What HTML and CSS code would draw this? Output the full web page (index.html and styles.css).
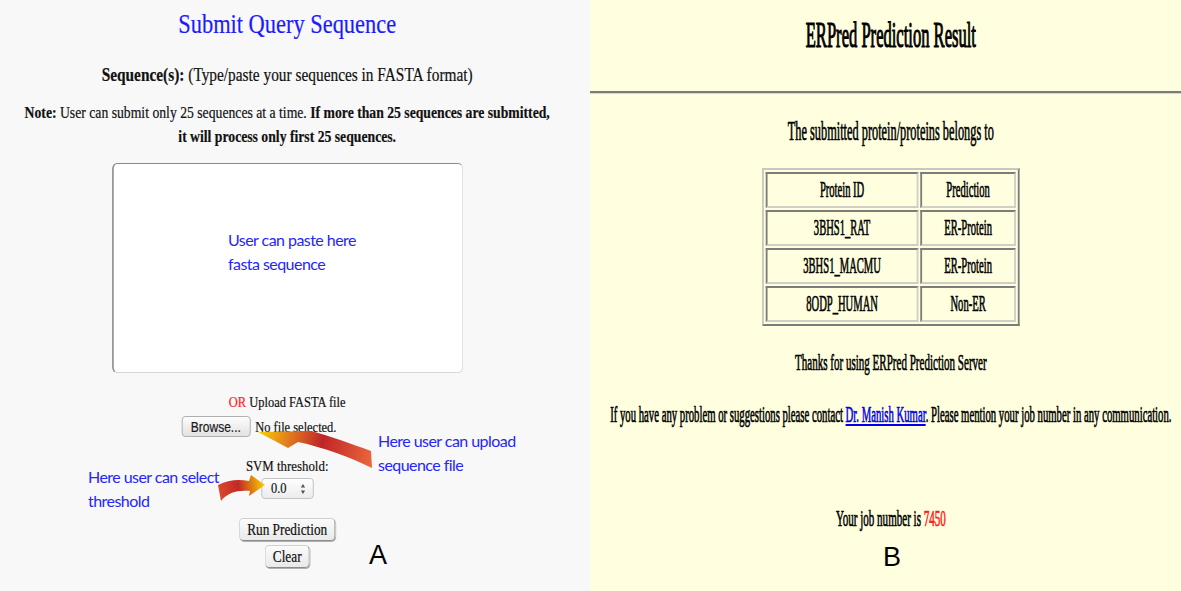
FILE: index.html
```html
<!DOCTYPE html>
<html lang="en">
<head>
<meta charset="utf-8">
<title>ERPred</title>
<link rel="stylesheet" href="styles.css">
</head>
<body>
<div class="page">
  <section class="panel left">
    <div class="left-inner">
      <h1 class="q-title">Submit Query Sequence</h1>
      <p class="seq-label"><b>Sequence(s):</b> (Type/paste your sequences in FASTA format)</p>
      <p class="note"><b>Note:</b> User can submit only 25 sequences at a time. <b>If more than 25 sequences are submitted,<br>it will process only first 25 sequences.</b></p>
      <div class="seq-box"></div>
      <p class="upload"><span class="or">OR</span> Upload FASTA file</p>
      <div class="file-row"><span class="browse">Browse...</span><span class="nofile">No file selected.</span></div>
      <p class="svm">SVM threshold:</p>
      <div class="spinner"><span class="spin-val">0.0</span><svg class="spin-arrows" width="6" height="12" viewBox="0 0 6 12"><path d="M3 1 L5.6 4.6 L0.4 4.6 Z M0.4 7.4 L5.6 7.4 L3 11 Z" fill="#555"/></svg></div>
      <span class="pbtn run">Run Prediction</span>
      <span class="pbtn clear">Clear</span>
    </div>
    <svg class="arrows" width="590" height="591" viewBox="0 0 590 591">
      <defs>
        <linearGradient id="g1" gradientUnits="userSpaceOnUse" x1="372" y1="460" x2="258" y2="432">
          <stop offset="0" stop-color="#ea663a"/>
          <stop offset="0.45" stop-color="#be2529"/>
          <stop offset="0.72" stop-color="#e0771f"/>
          <stop offset="1" stop-color="#f8d200"/>
        </linearGradient>
        <linearGradient id="g2" gradientUnits="userSpaceOnUse" x1="218" y1="492" x2="264" y2="485">
          <stop offset="0" stop-color="#dc4a2c"/>
          <stop offset="0.45" stop-color="#c22927"/>
          <stop offset="1" stop-color="#f7cb00"/>
        </linearGradient>
      </defs>
      <path d="M258 432 L311 431 C330 436 352 444 371 451 L372 468 C350 457 322 447 298 442 L288 448 Z" fill="url(#g1)"/>
      <path d="M218 485 C228 480 238 479 249 481 L251 475 L265 485 L249 496 L250 491 C238 490 228 492 221 501 Z" fill="url(#g2)"/>
    </svg>
    <div class="anno anno-paste">User can paste here<br>fasta sequence</div>
    <div class="anno anno-upload">Here user can upload<br>sequence file</div>
    <div class="anno anno-select">Here user can select<br>threshold</div>
    <div class="fig-label label-a">A</div>
  </section>
  <section class="panel right">
    <div class="right-inner">
      <h1 class="r-title">ERPred Prediction Result</h1>
      <div class="rule"></div>
      <p class="r-sub">The submitted protein/proteins belongs to</p>
      <table class="result">
        <tr><td class="c1">Protein ID</td><td class="c2">Prediction</td></tr>
        <tr><td class="c1">3BHS1_RAT</td><td class="c2">ER-Protein</td></tr>
        <tr><td class="c1">3BHS1_MACMU</td><td class="c2">ER-Protein</td></tr>
        <tr><td class="c1">8ODP_HUMAN</td><td class="c2">Non-ER</td></tr>
      </table>
      <p class="thanks">Thanks for using ERPred Prediction Server</p>
      <p class="contact">If you have any problem or suggestions please contact <a href="#" class="mail">Dr. Manish Kumar</a>. Please mention your job number in any communication.</p>
      <p class="job">Your job number is <span class="jobno">7450</span></p>
    </div>
    <div class="fig-label label-b">B</div>
  </section>
</div>
</body>
</html>
```
FILE: styles.css
```css
html, body {
  margin: 0;
  padding: 0;
}
body {
  width: 1181px;
  height: 591px;
  overflow: hidden;
  font-family: "Liberation Serif", "Times New Roman", serif;
  color: #111;
}
.page {
  display: flex;
  width: 1181px;
  height: 591px;
}
.panel {
  position: relative;
  height: 591px;
  overflow: hidden;
}
.left {
  width: 590px;
  background: #f8f8f8;
}
.right {
  width: 591px;
  background: #ffffdf;
}

/* ---------- left panel ---------- */
.left-inner {
  width: 692px;
  transform: scaleX(0.83);
  transform-origin: 0 0;
  display: flex;
  flex-direction: column;
  align-items: center;
  text-align: center;
  -webkit-text-stroke: 0.2px currentColor;
}
.q-title {
  margin: 9px 0 0;
  font-size: 27px;
  line-height: 30px;
  font-weight: normal;
  color: #1b1bff;
}
.seq-label {
  margin: 25px 0 0;
  font-size: 18.5px;
  line-height: 22px;
}
.note {
  margin: 15px 0 0;
  font-size: 16.5px;
  line-height: 24px;
}
.seq-box {
  box-sizing: border-box;
  width: 423px;
  height: 210px;
  margin-top: 14px;
  background: #fff;
  border: 1px solid #d6d6d6;
  border-top-color: #8a8a8a;
  border-left: 2px solid #8a8a8a;
  border-radius: 6px;
}
.upload {
  margin: 20px 0 0;
  font-size: 15px;
  line-height: 18px;
}
.or {
  color: #ff2222;
}
.file-row {
  display: flex;
  align-items: center;
  gap: 6px;
  width: 255px;
  margin-top: 5px;
}
.browse {
  box-sizing: border-box;
  width: 83px;
  height: 21px;
  display: flex;
  align-items: center;
  justify-content: center;
  font-family: "Liberation Sans", Arial, sans-serif;
  font-size: 14.5px;
  color: #1a1a1a;
  background: linear-gradient(#fdfdfd, #e2e2e2);
  border: 1px solid #a8a8a8;
  border-radius: 4px;
}
.nofile {
  font-size: 15px;
  line-height: 18px;
}
.svm {
  margin: 20px 0 0;
  font-size: 15.5px;
  line-height: 18px;
}
.spinner {
  box-sizing: border-box;
  width: 63px;
  height: 21px;
  margin-top: 3px;
  display: flex;
  align-items: center;
  justify-content: space-between;
  padding: 0 9px 0 11px;
  background: linear-gradient(#fefefe, #ececec);
  border: 1px solid #bdbdbd;
  border-radius: 4px;
  font-size: 15px;
}
.spin-arrows {
  display: block;
}
.pbtn {
  box-sizing: border-box;
  display: flex;
  align-items: center;
  justify-content: center;
  height: 23px;
  font-size: 16px;
  color: #111;
  background: linear-gradient(#fbfbfb, #e9e9e9);
  border: 1px solid #cfcfcf;
  border-right-color: #8c8c8c;
  border-bottom-color: #8c8c8c;
  border-radius: 5px;
  box-shadow: 1px 1px 0 #b0b0b0;
}
.run {
  width: 116px;
  margin-top: 19px;
}
.clear {
  width: 54px;
  margin-top: 4px;
}

/* overlays on left panel */
.arrows {
  position: absolute;
  left: 0;
  top: 0;
  pointer-events: none;
}
.anno {
  position: absolute;
  font-family: Lato, "Open Sans", sans-serif;
  font-size: 16px;
  line-height: 24px;
  letter-spacing: -0.55px;
  color: #2525ff;
  white-space: nowrap;
}
.anno-paste {
  left: 228px;
  top: 228px;
}
.anno-upload {
  left: 378px;
  top: 429px;
}
.anno-select {
  left: 88px;
  top: 465px;
}
.fig-label {
  position: absolute;
  font-family: "Liberation Sans", Arial, sans-serif;
  font-size: 27px;
  line-height: 32px;
  color: #000;
}
.label-a {
  left: 369px;
  top: 539px;
}
.label-b {
  left: 293px;
  top: 541px;
}

/* ---------- right panel ---------- */
.right-inner {
  width: 1308px;
  transform: scaleX(0.46);
  transform-origin: 0 0;
  display: flex;
  flex-direction: column;
  align-items: center;
  text-align: center;
  color: #000;
  -webkit-text-stroke: 0.7px currentColor;
}
.r-title {
  margin: 15px 0 0;
  font-size: 36px;
  line-height: 40px;
  font-weight: normal;
  -webkit-text-stroke: 1.2px currentColor;
}
.rule {
  align-self: stretch;
  margin-top: 36px;
  border-top: 2px solid #7b7b7b;
  border-bottom: 1px solid #d8d8c8;
}
.r-sub {
  margin: 22px 0 0;
  font-size: 26.8px;
  line-height: 30px;
}
.result {
  margin-top: 22px;
  border-collapse: separate;
  border-spacing: 4px 2px;
  border-style: solid;
  border-width: 2px 4px;
  border-color: #c8c8c0 #7c7c7c #7c7c7c #c8c8c0;
}
.result td {
  box-sizing: border-box;
  height: 36px;
  padding: 0;
  font-size: 23px;
  text-align: center;
  border-style: solid;
  border-width: 2px 4px;
  border-color: #7c7c7c #cfcfc4 #cfcfc4 #7c7c7c;
}
.result .c1 {
  width: 332px;
}
.result .c2 {
  width: 208px;
}
.thanks {
  margin: 22px 0 0;
  font-size: 24px;
  line-height: 28px;
}
.contact {
  margin: 24px 0 0;
  font-size: 23.3px;
  line-height: 28px;
  white-space: nowrap;
}
.mail {
  color: #0000ee;
  text-decoration: underline;
}
.job {
  margin: 76px 0 0;
  font-size: 24px;
  line-height: 28px;
}
.jobno {
  color: #ff1a1a;
}
```
